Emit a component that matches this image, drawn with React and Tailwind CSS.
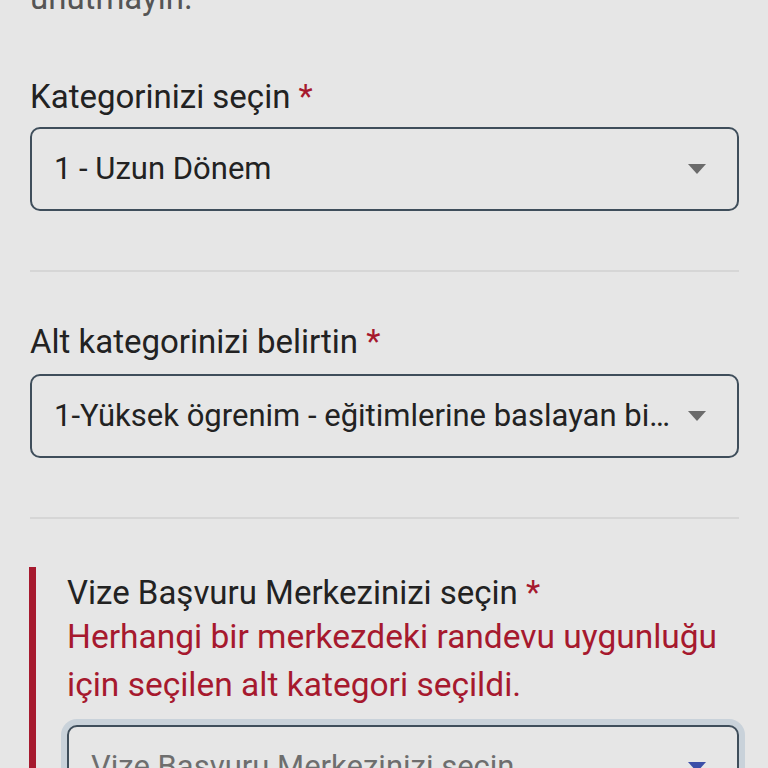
import React from "react";

function Arrow({ color = "#6b6b6b" }) {
  return (
    <svg width="20" height="10" viewBox="0 0 20 10" className="shrink-0">
      <path d="M1 0 L19 0 L10 10 Z" fill={color} />
    </svg>
  );
}

function Select({ value, placeholder, focused }) {
  return (
    <div
      className={
        "flex h-[84px] items-center justify-between rounded-[10px] border-2 border-[#3f4e5b] bg-[#e6e6e6] pl-[22px] pr-[30px] " +
        (focused ? "shadow-[0_0_0_6px_#c9d2da]" : "")
      }
    >
      <span
        className={
          "truncate text-[31px] leading-[40px] " +
          (placeholder ? "text-[#6e6e6e]" : "text-[#222222]")
        }
      >
        {value}
      </span>
      <span className="ml-4">
        <Arrow color={focused ? "#3c4fa8" : "#6b6b6b"} />
      </span>
    </div>
  );
}

function Label({ children }) {
  return (
    <div className="text-[33px] leading-[40px] text-[#222222]">
      {children} <span className="text-[#a6192e]">*</span>
    </div>
  );
}

export default function App() {
  return (
    <div
      className="h-[768px] w-[768px] overflow-hidden bg-[#e6e6e6] pl-[30px] pr-[29px]"
      style={{ fontFamily: "Roboto, 'Noto Sans', sans-serif" }}
    >
      <div className="-mt-[22px] text-[33px] leading-[40px] text-[#555555]">
        unutmayın.
      </div>

      <div className="mt-[59px]">
        <Label>Kategorinizi seçin</Label>
        <div className="mt-[10px]">
          <Select value="1 - Uzun Dönem" />
        </div>
      </div>

      <div className="mt-[59px] h-[2px] bg-[#d6d6d6]" />

      <div className="mt-[50px]">
        <Label>Alt kategorinizi belirtin</Label>
        <div className="mt-[12px]">
          <Select value="1-Yüksek ögrenim - eğitimlerine baslayan bireyler" />
        </div>
      </div>

      <div className="mt-[59px] h-[2px] bg-[#d6d6d6]" />

      <div className="-ml-px mt-[48px] flex">
        <div className="w-[7px] shrink-0 bg-[#a6192e]" />
        <div className="flex-1 pl-[31px] pt-[6px]">
          <Label>Vize Başvuru Merkezinizi seçin</Label>
          <div className="text-[33.5px] leading-[48px] text-[#a6192e]">
            Herhangi bir merkezdeki randevu uygunluğu
            <br />
            için seçilen alt kategori seçildi.
          </div>
          <div className="mt-[16px]">
            <Select value="Vize Başvuru Merkezinizi seçin" placeholder focused />
          </div>
        </div>
      </div>
    </div>
  );
}
